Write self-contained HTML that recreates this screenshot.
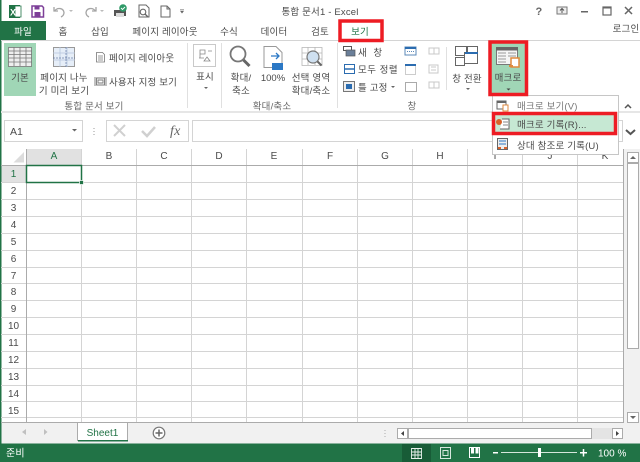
<!DOCTYPE html>
<html lang="ko"><head><meta charset="utf-8"><title>통합 문서1 - Excel</title>
<style>
html,body{margin:0;padding:0;background:#fff}
svg{display:block;position:absolute;left:0;top:0}
text{font-family:"Liberation Sans","Noto Sans CJK KR",sans-serif;font-size:9.5px;fill:#4a4a4a;letter-spacing:.18px}
.m{text-anchor:middle}
.h{font-size:10px;fill:#4a4a4a;text-anchor:middle;letter-spacing:0}
</style></head><body>
<svg width="640" height="462" viewBox="0 0 640 462" xmlns="http://www.w3.org/2000/svg">
<rect width="640" height="462" fill="#fff"/>
<!-- window border -->
<rect x="0" y="0" width="1.500" height="462" fill="#217346"/>
<!-- QAT -->
<rect x="9" y="5" width="11" height="13" fill="#217346"/><rect x="15" y="6" width="6" height="11" fill="#fff" stroke="#217346" stroke-width=".8"/>
<text x="10" y="15.500" style="font-size:9px;font-weight:bold;fill:#fff;letter-spacing:0">X</text>
<path d="M32 6h10l1.500 1.500V17H32z" fill="none" stroke="#7d3f98" stroke-width="1.500"/><rect x="34.500" y="6" width="5" height="3.500" fill="#7d3f98"/><rect x="34.500" y="12" width="6" height="4.500" fill="#7d3f98"/>
<path d="M54 7v4h4M54.500 11c3-4 9-3 9.500 1.500 0 2-1 3.500-3 4.500" fill="none" stroke="#a5a5a5" stroke-width="1.300"/><path d="M69 10l2 2 2-2z" fill="#bbb"/>
<path d="M96 7v4h-4M95.500 11c-3-4-9-3-9.500 1.500 0 2 1 3.500 3 4.500" fill="none" stroke="#a5a5a5" stroke-width="1.300"/><path d="M100 10l2 2 2-2z" fill="#bbb"/>
<rect x="114" y="10" width="12" height="6" fill="#555"/><rect x="116" y="13" width="8" height="4" fill="#ddd"/><circle cx="123" cy="8" r="3.800" fill="#2f9a68"/><path d="M121 8l1.500 1.500 2.500-2.500" stroke="#fff" fill="none" stroke-width=".9"/>
<path d="M139 5h7l3 3v9h-10z" fill="#fff" stroke="#666"/><circle cx="143" cy="12" r="2.800" fill="#fff" stroke="#666" stroke-width="1.100"/><path d="M145 14l3 3" stroke="#666" stroke-width="1.300"/>
<path d="M161 6h6l3 3v8h-9zM167 6v3h3" fill="#fff" stroke="#666"/>
<path d="M180 9.500h4M180.500 11l1.500 2 1.500-2z" fill="#666" stroke="#666" stroke-width=".6"/>
<text class="m" x="320" y="15">통합 문서1 - Excel</text>
<!-- window controls -->
<text class="m" x="539" y="15" style="font-size:11px;font-weight:bold;fill:#666">?</text>
<rect x="557" y="7" width="10" height="7" fill="#eee" stroke="#777"/><path d="M562 13V9M560 10.500l2-2 2 2" stroke="#555" fill="none"/>
<rect x="581" y="11" width="7" height="1.500" fill="#666"/>
<rect x="603" y="7" width="8" height="8" fill="none" stroke="#666" stroke-width="1.200"/><rect x="603" y="7" width="8" height="1.500" fill="#666"/>
<path d="M625 7l7 7M632 7l-7 7" stroke="#666" stroke-width="1.500"/>
<!-- tabs -->
<rect x="1" y="21" width="45" height="19" fill="#217346"/>
<text class="m" x="23" y="35" style="fill:#fff">파일</text>
<text class="m" x="63" y="35">홈</text>
<text class="m" x="100" y="35">삽입</text>
<text class="m" x="165" y="35">페이지 레이아웃</text>
<text class="m" x="229" y="35">수식</text>
<text class="m" x="274" y="35">데이터</text>
<text class="m" x="320" y="35">검토</text>
<text class="m" x="360" y="35" style="fill:#217346">보기</text>
<text class="m" x="626" y="32">로그인</text>
<rect x="1" y="40" width="639" height="1" fill="#d4d4d4"/>
<!-- ribbon -->
<rect x="1" y="111" width="639" height="2" fill="#e6e6e6"/>
<rect x="4" y="43" width="32" height="53" fill="#a0d6b6"/>
<g fill="none" stroke="#777" stroke-width=".8"><rect x="8.500" y="47.500" width="23" height="19" fill="#eee"/><path d="M8 51h24M8 54.500h24M8 58h24M8 62h24M14 47v19M20 47v19M26 47v19"/></g>
<text class="m" x="20" y="81">기본</text>
<rect x="53.500" y="47.500" width="21" height="19" fill="#e6eef8" stroke="#999"/><path d="M53 53h22M53 60h22M60 47v20M67 47v20" stroke="#b5c5dd" stroke-width=".8"/><path d="M53 58h22M66 47v20" stroke="#6b7fa8" stroke-dasharray="2 1" stroke-width=".7"/>
<text class="m" x="64" y="81">페이지 나누</text>
<text class="m" x="64" y="94">기 미리 보기</text>
<path d="M96.500 52.500h6l2 2v7.500h-8zM98 56h5M98 58h5M98 60h5" fill="#fff" stroke="#777" stroke-width=".8"/>
<text x="109" y="61.500">페이지 레이아웃</text>
<path d="M95 77v9M106 77v9M96.500 78h8v7h-8zM98 80h5v3h-5z" fill="none" stroke="#777" stroke-width=".9"/>
<text x="109" y="85.500">사용자 지정 보기</text>
<text class="m" x="94" y="109.500" style="fill:#666">통합 문서 보기</text>
<rect x="187" y="43" width="1" height="65" fill="#e0e0e0"/>
<rect x="193.500" y="44.500" width="22" height="22" fill="#fff" stroke="#c9c9c9"/>
<path d="M200 50h5v4h-5zM208 51h4M199 58h5M207 57l3 4h-6zM200 54v4" fill="none" stroke="#888" stroke-width=".8"/>
<text class="m" x="205" y="80">표시</text><path d="M204 87l2 2 2-2z" fill="#666"/>
<rect x="221" y="43" width="1" height="65" fill="#e0e0e0"/>
<circle cx="238" cy="54" r="7.500" fill="none" stroke="#777" stroke-width="1.800"/><path d="M243.500 60l6 6" stroke="#666" stroke-width="3"/>
<text class="m" x="241" y="81">확대/</text><text class="m" x="241" y="94">축소</text>
<path d="M264 46.500h12l6 6v15h-18z" fill="#fff" stroke="#999"/><path d="M271 56h8M276 53l3 3-3 3" fill="none" stroke="#2b78c5" stroke-width="1.300"/><rect x="272" y="63" width="11" height="7" fill="#2b78c5"/>
<text class="m" x="273" y="81" style="letter-spacing:0">100%</text>
<path d="M302 47.500h20v18h-20zM302 53h20M302 59h20M308 47v18M315 47v18" fill="#fff" stroke="#b5b5b5" stroke-width=".8"/><circle cx="313" cy="57" r="6" fill="#cfe0f0" stroke="#777" stroke-width="1.200"/><path d="M317.500 61.500l4 4" stroke="#666" stroke-width="2"/>
<text class="m" x="311" y="81">선택 영역</text><text class="m" x="311" y="94">확대/축소</text>
<text class="m" x="272" y="109.500" style="fill:#666">확대/축소</text>
<rect x="337" y="43" width="1" height="65" fill="#e0e0e0"/>
<rect x="343.500" y="46.500" width="8" height="4" fill="#fff" stroke="#555"/><rect x="346" y="50" width="9" height="6" fill="#6a7f99" stroke="#555" stroke-width=".7"/>
<text x="358" y="56" style="letter-spacing:2px">새 창</text>
<rect x="344.500" y="64.500" width="10" height="9" fill="#fff" stroke="#2b6cb0"/><path d="M344 69h11" stroke="#2b6cb0" stroke-width="1.500"/>
<text x="358" y="73" style="letter-spacing:.5px">모두 정렬</text>
<rect x="343.500" y="81.500" width="11" height="10" fill="#eee" stroke="#777"/><rect x="346" y="84" width="6" height="5" fill="#2b6cb0"/>
<text x="358" y="91">틀 고정</text><path d="M391 86l2 2 2-2z" fill="#666"/>
<rect x="405" y="47" width="11" height="8" fill="#fff" stroke="#5b88b8"/><rect x="405" y="47" width="11" height="2" fill="#2b6cb0"/><path d="M407 51.500h7" stroke="#5b88b8" stroke-dasharray="1 1"/>
<rect x="405.500" y="64.500" width="10" height="10" fill="#fff" stroke="#999" stroke-dasharray="1 1"/><rect x="405" y="64" width="11" height="2" fill="#2b6cb0"/>
<rect x="405.500" y="82.500" width="11" height="9" fill="#fff" stroke="#aaa"/>
<g fill="#fff" stroke="#c8c8c8"><path d="M429 48h5v6h-5zM434 48h5v6h-5z"/><path d="M429 65h9v8h-9zM431 67h5M431 70h5"/><path d="M429 82h5v6h-5zM434 82h5v6h-5z"/></g>
<rect x="446" y="47" width="1" height="43" fill="#e0e0e0"/>
<g fill="#fff" stroke="#666"><rect x="455.500" y="46.500" width="11" height="9"/><rect x="467.500" y="46.500" width="10" height="9"/><rect x="455.500" y="57.500" width="9" height="8"/><rect x="464.500" y="52.500" width="13" height="11"/></g><rect x="465" y="52" width="13" height="2" fill="#2b6cb0"/>
<text class="m" x="467" y="82">창 전환</text><path d="M466 88l2 2 2-2z" fill="#666"/>
<text class="m" x="412" y="109.500" style="fill:#666">창</text>
<!-- macro button -->
<rect x="491" y="43" width="35" height="52" fill="#a0d6b6"/>
<rect x="496.500" y="47.500" width="21" height="17" fill="#f5f5f5" stroke="#777"/><rect x="496" y="47" width="22" height="3.500" fill="#666"/><path d="M498 53h8M508 53h8M498 56h8M508 56h8M498 59h8M498 62h8" stroke="#999"/>
<path d="M511 58h8v9h-8z" fill="#fff" stroke="#e08a3c" stroke-width="1.500"/><path d="M509 66h4" stroke="#e08a3c" stroke-width="2"/>
<text class="m" x="508" y="81">매크로</text><path d="M506.500 88.500l2 2 2-2z" fill="#444"/>
<path d="M625 108l3-3 3 3" fill="none" stroke="#555" stroke-width="1.500"/>
<!-- formula bar -->
<rect x="4.500" y="120.500" width="78" height="21" fill="#fff" stroke="#d4d4d4"/>
<text x="10" y="135" style="font-size:10.500px;letter-spacing:0">A1</text><path d="M72 129l2.500 2.500L77 129z" fill="#666"/>
<path d="M94 128v1M94 131v1M94 134v1" stroke="#999"/>
<rect x="106.500" y="120.500" width="82" height="21" fill="#fff" stroke="#d4d4d4"/>
<path d="M114 125l11 11M125 125l-11 11" stroke="#d0d0d0" stroke-width="2"/>
<path d="M142 131l5 5 8-9" fill="none" stroke="#d0d0d0" stroke-width="2.500"/>
<text x="170" y="135" style="font-family:'Liberation Serif',serif;font-style:italic;font-size:14px;fill:#666">fx</text>
<rect x="192.500" y="120.500" width="430" height="21" fill="#fff" stroke="#d4d4d4"/>
<path d="M626 130l4.500 4 4.500-4" fill="none" stroke="#555" stroke-width="2"/>
<!-- grid -->
<rect x="26.500" y="149" width="55" height="16" fill="#e1e1e1"/>
<rect x="1.500" y="165" width="25" height="17" fill="#e1e1e1"/>
<path d="M24 152v10.500H13.500z" fill="#dcdcdc"/>
<g stroke="#d4d4d4" fill="none">
<path d="M81.500 149V422M136.500 149V422M191.500 149V422M246.500 149V422M302.500 149V422M357.500 149V422M412.500 149V422M467.500 149V422M522.500 149V422M577.500 149V422"/>
<path d="M1 182.500H623M1 199.500H623M1 216.500H623M1 233.500H623M1 250.500H623M1 267.500H623M1 283.500H623M1 300.500H623M1 317.500H623M1 334.500H623M1 351.500H623M1 368.500H623M1 385.500H623M1 401.500H623M1 417.500H623"/>
</g>
<path d="M26.500 149V422M1 165.500H623" stroke="#ababab" fill="none"/>
<path d="M623.500 149V422" stroke="#ababab"/>
<rect x="1" y="422" width="623" height="1" fill="#ababab"/>
<text class="h" x="54" y="159" style="fill:#217346">A</text>
<text class="h" x="109" y="159">B</text><text class="h" x="164" y="159">C</text><text class="h" x="219" y="159">D</text><text class="h" x="274" y="159">E</text><text class="h" x="330" y="159">F</text><text class="h" x="385" y="159">G</text><text class="h" x="440" y="159">H</text><text class="h" x="495" y="159">I</text><text class="h" x="550" y="159">J</text><text class="h" x="605" y="159">K</text>
<text class="h" x="13.500" y="177" style="fill:#217346">1</text><text class="h" x="13.500" y="194">2</text><text class="h" x="13.500" y="211">3</text><text class="h" x="13.500" y="228">4</text><text class="h" x="13.500" y="245">5</text><text class="h" x="13.500" y="262">6</text><text class="h" x="13.500" y="279">7</text><text class="h" x="13.500" y="295">8</text><text class="h" x="13.500" y="312">9</text><text class="h" x="13.500" y="329">10</text><text class="h" x="13.500" y="346">11</text><text class="h" x="13.500" y="363">12</text><text class="h" x="13.500" y="380">13</text><text class="h" x="13.500" y="397">14</text><text class="h" x="13.500" y="414">15</text>
<rect x="26.500" y="165.500" width="55" height="17" fill="none" stroke="#217346" stroke-width="1.500"/>
<rect x="79.500" y="180.500" width="4" height="4" fill="#217346" stroke="#fff" stroke-width=".7"/>
<!-- bottom bar -->
<rect x="1.500" y="423" width="638.500" height="20.500" fill="#f1f1f1"/>
<path d="M22 432l4-3v6zM44 429l3.500 3-3.500 3z" fill="#c0c0c0"/>
<path d="M77.500 422.500H127.500V440.500H77.500z" fill="#fff"/><path d="M77.500 441V422.500H127.500V441" fill="none" stroke="#ababab"/><rect x="78" y="440" width="50" height="1.500" fill="#217346"/>
<text class="m" x="102.500" y="436" style="fill:#217346;font-size:10px;letter-spacing:0">Sheet1</text>
<circle cx="159" cy="433" r="5.800" fill="#fff" stroke="#777" stroke-width="1.200"/><path d="M155.500 433h7M159 429.500v7" stroke="#666" stroke-width="1.500"/>
<path d="M385 430v1M385 433v1M385 436v1" stroke="#aaa"/>
<!-- h scrollbar -->
<rect x="397.500" y="428.500" width="10" height="10" fill="#fff" stroke="#ababab"/><path d="M404 431v5l-3-2.500z" fill="#444"/>
<rect x="408.500" y="428.500" width="183" height="10" fill="#fff" stroke="#ababab"/>
<rect x="592" y="428" width="20" height="11" fill="#e4e4e4"/>
<rect x="612.500" y="428.500" width="10" height="10" fill="#fff" stroke="#ababab"/><path d="M616 431v5l3-2.500z" fill="#444"/>
<!-- v scrollbar -->
<rect x="624" y="149" width="16" height="274" fill="#f1f1f1"/>
<rect x="627.500" y="152.500" width="11" height="10" fill="#fff" stroke="#ababab"/><path d="M630 159l3-3 3 3z" fill="#666"/>
<rect x="627.500" y="163.500" width="11" height="185" fill="#fff" stroke="#ababab"/>
<rect x="627.500" y="412.500" width="11" height="10" fill="#fff" stroke="#ababab"/><path d="M630 416h6l-3 3z" fill="#666"/>
<!-- status bar -->
<rect x="0" y="443.500" width="640" height="18.500" fill="#217346"/>
<text x="6" y="456.500" style="fill:#fff;font-size:10px">준비</text>
<rect x="402" y="444" width="29" height="18" fill="#185c37"/>
<path d="M411.500 448.500h10v10h-10zM411.500 452h10M411.500 455h10M415 448v11M418 448v11" fill="none" stroke="#e8f0eb" stroke-width=".9"/>
<rect x="440.500" y="447.500" width="10" height="11" fill="none" stroke="#d6e6dc"/><rect x="443" y="450.500" width="5" height="5" fill="none" stroke="#d6e6dc"/>
<rect x="469.500" y="447.500" width="10" height="10" fill="none" stroke="#fff"/><rect x="471" y="447" width="3" height="6.500" fill="#fff"/><rect x="475.500" y="447" width="3" height="6.500" fill="#fff"/>
<rect x="493" y="452" width="5" height="1.500" fill="#fff"/>
<rect x="501" y="452" width="76" height="1" fill="#d6e6dc"/>
<rect x="538" y="448" width="3" height="9" fill="#fff"/>
<path d="M580 452.700h7M583.500 449v7.500" stroke="#fff" stroke-width="1.500"/>
<text x="598" y="456.500" style="fill:#fff;font-size:10px;letter-spacing:0">100 %</text>
<!-- dropdown -->
<rect x="492.500" y="95.500" width="126" height="59" fill="#fff" stroke="#c6c6c6"/>
<rect x="497" y="101" width="9" height="8" fill="#fff" stroke="#666"/><rect x="497" y="101" width="9" height="2" fill="#666"/><rect x="503" y="105" width="5" height="6" fill="#fff" stroke="#e08a3c"/>
<text x="517" y="109.500" style="fill:#777">매크로 보기(V)</text>
<rect x="494" y="113" width="122" height="21" fill="#c6e8d3"/>
<path d="M502 119h7v10h-9" fill="#fff" stroke="#666"/><path d="M503 122h5M503 125h5" stroke="#888"/><circle cx="499" cy="122" r="3" fill="#d9622b"/>
<text x="517" y="128">매크로 기록(R)...</text>
<rect x="497.500" y="138.500" width="10" height="11" fill="#eee" stroke="#666"/><path d="M499 141h7M499 144h7" stroke="#2b78c5"/><rect x="498" y="147" width="3" height="2" fill="#d9622b"/><rect x="504" y="147" width="3" height="2" fill="#d9622b"/>
<text x="517" y="149">상대 참조로 기록(U)</text>
<!-- red highlights -->
<g fill="none" stroke="#ed1c24" stroke-width="3.500">
<rect x="340" y="21" width="42" height="19.500"/>
<rect x="490" y="42" width="36.500" height="52.500"/>
<rect x="493.500" y="113.500" width="122" height="20"/>
</g>
</svg>
</body></html>
